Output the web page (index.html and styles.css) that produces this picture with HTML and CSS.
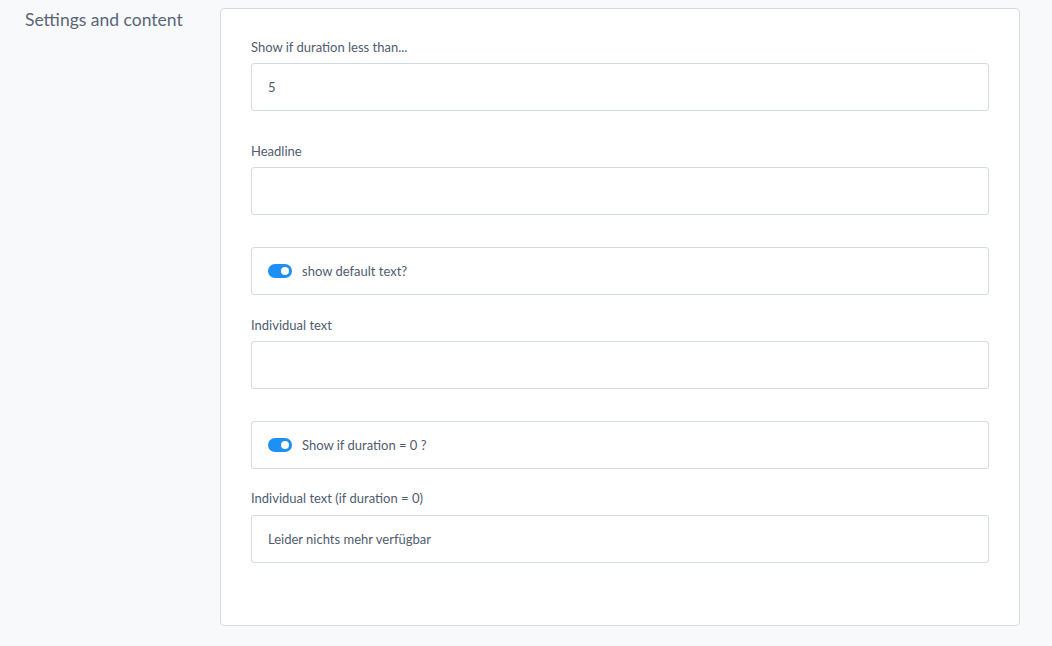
FILE: index.html
```html
<!DOCTYPE html>
<html lang="en">

<head>
    <meta charset="UTF-8">
    <meta name="viewport" content="width=device-width, initial-scale=1.0">
    <title>Settings and content</title>
    <link rel="stylesheet" href="styles.css">
</head>

<body>
    <div class="section">
        <h2 class="section-title">Settings and content</h2>

        <div class="panel">
            <div class="field">
                <label>Show if duration less than...</label>
                <input type="text" value="5">
            </div>

            <div class="field">
                <label>Headline</label>
                <input type="text">
            </div>

            <div class="field toggle-field">
                <label class="toggle-box">
                    <span class="switch on"></span>
                    <span>show default text?</span>
                </label>
            </div>

            <div class="field">
                <label>Individual text</label>
                <input type="text">
            </div>

            <div class="field toggle-field tight">
                <label class="toggle-box">
                    <span class="switch on"></span>
                    <span>Show if duration = 0 ?</span>
                </label>
            </div>

            <div class="field">
                <label class="label-wide">Individual text (if duration = 0)</label>
                <input type="text" value="Leider nichts mehr verfügbar">
            </div>
        </div>
    </div>
</body>

</html>
```

FILE: styles.css
```css
* {
    box-sizing: border-box;
}

body {
    margin: 0;
    background-color: #f8f9fb;
    font-family: Lato, "Open Sans", sans-serif;
    color: #4a5568;
}

.section {
    display: grid;
    grid-template-columns: 220px 800px;
    padding-top: 8px;
}

.section-title {
    margin: 0;
    padding-left: 25px;
    font-size: 17.5px;
    font-weight: 400;
    line-height: 24px;
    color: #5a6677;
}

.panel {
    height: 618px;
    background-color: #fff;
    border: 1px solid #d3dae1;
    border-radius: 4px;
    padding: 30px 30px 0 30px;
}

.field {
    display: flex;
    flex-direction: column;
    margin-bottom: 32px;
}

.field label {
    font-size: 13px;
    line-height: 16px;
    margin-bottom: 8px;
    color: #505c6e;
}

.field .label-wide {
    margin-bottom: 9px;
}

.field input {
    height: 48px;
    border: 1px solid #d3dae1;
    border-radius: 3px;
    padding: 0 16px;
    font-family: inherit;
    font-size: 13px;
    color: #505c6e;
    outline: none;
}

.toggle-field {
    margin-bottom: 22px;
}

.toggle-field.tight {
    margin-bottom: 21px;
}

.field .toggle-box {
    display: flex;
    align-items: center;
    gap: 10px;
    height: 48px;
    margin: 0;
    padding: 0 16px;
    border: 1px solid #d3dae1;
    border-radius: 3px;
}

.switch {
    position: relative;
    width: 24px;
    height: 14px;
    border-radius: 7px;
    background-color: #d3dae1;
}

.switch.on {
    background-color: #1e90f5;
}

.switch::after {
    content: "";
    position: absolute;
    top: 3px;
    left: 3px;
    width: 8px;
    height: 8px;
    border-radius: 50%;
    background-color: #fff;
}

.switch.on::after {
    left: 13px;
}
```
